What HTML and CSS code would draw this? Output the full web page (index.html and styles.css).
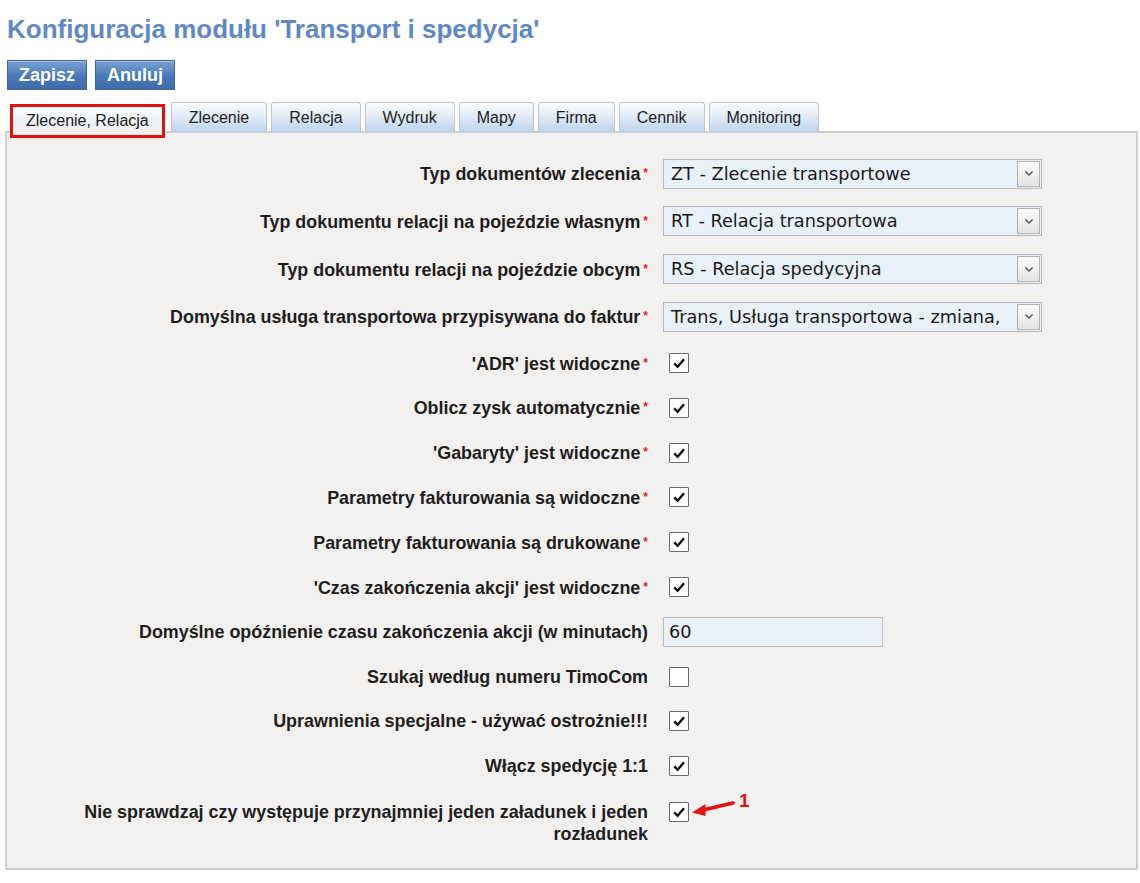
FILE: index.html
```html
<!DOCTYPE html>
<html lang="pl">
<head>
<meta charset="utf-8">
<title>Konfiguracja modułu 'Transport i spedycja'</title>
<link rel="stylesheet" href="styles.css">
</head>
<body>
<div class="page">
  <h1 class="title">Konfiguracja modułu 'Transport i spedycja'</h1>
  <div class="actions">
    <button class="btn" type="button">Zapisz</button>
    <button class="btn" type="button">Anuluj</button>
  </div>
  <div class="tabs">
    <div class="tab tab-active">Zlecenie, Relacja</div>
    <div class="tab">Zlecenie</div>
    <div class="tab">Relacja</div>
    <div class="tab">Wydruk</div>
    <div class="tab">Mapy</div>
    <div class="tab">Firma</div>
    <div class="tab">Cennik</div>
    <div class="tab">Monitoring</div>
  </div>
  <div class="panel">
    <div class="form">
      <div class="row row-select">
        <div class="label">Typ dokumentów zlecenia<span class="req">*</span></div>
        <div class="control"><div class="select"><span class="select-text">ZT - Zlecenie transportowe</span><span class="select-btn"><svg width="10" height="7" viewBox="0 0 10 7"><path d="M1.5 1.5 L5 5 L8.5 1.5" fill="none" stroke="#555" stroke-width="1.4"/></svg></span></div></div>
      </div>
      <div class="row row-select">
        <div class="label">Typ dokumentu relacji na pojeździe własnym<span class="req">*</span></div>
        <div class="control"><div class="select"><span class="select-text">RT - Relacja transportowa</span><span class="select-btn"><svg width="10" height="7" viewBox="0 0 10 7"><path d="M1.5 1.5 L5 5 L8.5 1.5" fill="none" stroke="#555" stroke-width="1.4"/></svg></span></div></div>
      </div>
      <div class="row row-select">
        <div class="label">Typ dokumentu relacji na pojeździe obcym<span class="req">*</span></div>
        <div class="control"><div class="select"><span class="select-text">RS - Relacja spedycyjna</span><span class="select-btn"><svg width="10" height="7" viewBox="0 0 10 7"><path d="M1.5 1.5 L5 5 L8.5 1.5" fill="none" stroke="#555" stroke-width="1.4"/></svg></span></div></div>
      </div>
      <div class="row row-select">
        <div class="label">Domyślna usługa transportowa przypisywana do faktur<span class="req">*</span></div>
        <div class="control"><div class="select"><span class="select-text">Trans, Usługa transportowa - zmiana,</span><span class="select-btn"><svg width="10" height="7" viewBox="0 0 10 7"><path d="M1.5 1.5 L5 5 L8.5 1.5" fill="none" stroke="#555" stroke-width="1.4"/></svg></span></div></div>
      </div>
      <div class="row">
        <div class="label">'ADR' jest widoczne<span class="req">*</span></div>
        <div class="control"><span class="check"><svg width="16" height="16" viewBox="0 0 16 16"><path d="M3.2 8.4 L6.6 11.8 L13 4.2" fill="none" stroke="#111" stroke-width="2.4"/></svg></span></div>
      </div>
      <div class="row">
        <div class="label">Oblicz zysk automatycznie<span class="req">*</span></div>
        <div class="control"><span class="check"><svg width="16" height="16" viewBox="0 0 16 16"><path d="M3.2 8.4 L6.6 11.8 L13 4.2" fill="none" stroke="#111" stroke-width="2.4"/></svg></span></div>
      </div>
      <div class="row">
        <div class="label">'Gabaryty' jest widoczne<span class="req">*</span></div>
        <div class="control"><span class="check"><svg width="16" height="16" viewBox="0 0 16 16"><path d="M3.2 8.4 L6.6 11.8 L13 4.2" fill="none" stroke="#111" stroke-width="2.4"/></svg></span></div>
      </div>
      <div class="row">
        <div class="label">Parametry fakturowania są widoczne<span class="req">*</span></div>
        <div class="control"><span class="check"><svg width="16" height="16" viewBox="0 0 16 16"><path d="M3.2 8.4 L6.6 11.8 L13 4.2" fill="none" stroke="#111" stroke-width="2.4"/></svg></span></div>
      </div>
      <div class="row">
        <div class="label">Parametry fakturowania są drukowane<span class="req">*</span></div>
        <div class="control"><span class="check"><svg width="16" height="16" viewBox="0 0 16 16"><path d="M3.2 8.4 L6.6 11.8 L13 4.2" fill="none" stroke="#111" stroke-width="2.4"/></svg></span></div>
      </div>
      <div class="row">
        <div class="label">'Czas zakończenia akcji' jest widoczne<span class="req">*</span></div>
        <div class="control"><span class="check"><svg width="16" height="16" viewBox="0 0 16 16"><path d="M3.2 8.4 L6.6 11.8 L13 4.2" fill="none" stroke="#111" stroke-width="2.4"/></svg></span></div>
      </div>
      <div class="row">
        <div class="label">Domyślne opóźnienie czasu zakończenia akcji (w minutach)</div>
        <div class="control"><div class="input">60</div></div>
      </div>
      <div class="row">
        <div class="label">Szukaj według numeru TimoCom</div>
        <div class="control"><span class="check"></span></div>
      </div>
      <div class="row">
        <div class="label">Uprawnienia specjalne - używać ostrożnie!!!</div>
        <div class="control"><span class="check"><svg width="16" height="16" viewBox="0 0 16 16"><path d="M3.2 8.4 L6.6 11.8 L13 4.2" fill="none" stroke="#111" stroke-width="2.4"/></svg></span></div>
      </div>
      <div class="row">
        <div class="label">Włącz spedycję 1:1</div>
        <div class="control"><span class="check"><svg width="16" height="16" viewBox="0 0 16 16"><path d="M3.2 8.4 L6.6 11.8 L13 4.2" fill="none" stroke="#111" stroke-width="2.4"/></svg></span></div>
      </div>
      <div class="row row-multi">
        <div class="label">Nie sprawdzaj czy występuje przynajmniej jeden załadunek i jeden rozładunek</div>
        <div class="control">
          <span class="check"><svg width="16" height="16" viewBox="0 0 16 16"><path d="M3.2 8.4 L6.6 11.8 L13 4.2" fill="none" stroke="#111" stroke-width="2.4"/></svg></span>
          <svg class="marker" width="70" height="30" viewBox="0 0 70 30"><path d="M42 8 L12 15" stroke="#e81010" stroke-width="3.6" stroke-linecap="round"/><path d="M1 17.5 L14.5 9 L14.5 21 Z" fill="#e81010"/></svg>
          <span class="marker-num">1</span>
        </div>
      </div>
    </div>
  </div>
</div>
</body>
</html>
```
FILE: styles.css
```css
html, body {
  margin: 0;
  padding: 0;
  background: #ffffff;
}
body {
  font-family: "Liberation Sans", Arial, sans-serif;
  color: #1e1e1e;
}
.page {
  padding: 0 2px 0 5px;
  width: 1133px;
}
.title {
  margin: 14px 0 0 2px;
  font-size: 26px;
  line-height: 30px;
  font-weight: bold;
  color: #6089c4;
}
.actions {
  display: flex;
  gap: 8px;
  margin: 16px 0 0 2px;
}
.btn {
  height: 30px;
  width: 80px;
  border: 1px solid #3c66a2;
  background: linear-gradient(#7aa3d6, #4a78b6 55%, #3e6caa);
  color: #ffffff;
  font-family: "Liberation Sans", Arial, sans-serif;
  font-size: 18px;
  font-weight: bold;
  padding: 0;
  box-shadow: inset 0 1px 0 rgba(255,255,255,0.35);
}
.tabs {
  display: flex;
  align-items: flex-start;
  gap: 4px;
  margin: 12px 0 0 5px;
  height: 30px;
  position: relative;
  z-index: 2;
}
.tab {
  box-sizing: border-box;
  height: 30px;
  padding: 0 17px;
  border: 1px solid #c4c4c4;
  border-bottom: none;
  border-radius: 3px 3px 0 0;
  background: linear-gradient(#fbfcfe, #e3ecf7 45%, #bcd2ee);
  font-size: 16px;
  line-height: 30px;
  color: #222;
  white-space: nowrap;
}
.tab-active {
  margin-top: 2px;
  margin-right: 2px;
  height: 34px;
  border: 3.5px solid #e41010;
  border-radius: 0;
  padding: 0 13px;
  line-height: 27px;
  background: linear-gradient(#ffffff, #e9eff8 60%, #f3f0f0 80%);
}
.panel {
  border: 2px solid #cfcfcf;
  background: #f3f0f0;
  margin-top: -1px;
  padding: 17px 0 23px;
}
.form {
  display: flex;
  flex-direction: column;
}
.row {
  display: grid;
  grid-template-columns: 570px 1fr;
  column-gap: 15px;
  align-items: center;
  height: 44.8px;
  padding-left: 71px;
}
.row-select {
  height: 47.67px;
}
.row-multi {
  height: auto;
  align-items: start;
  padding-top: 12px;
}
.label {
  text-align: right;
  font-size: 17.9px;
  line-height: 22px;
  font-weight: bold;
  color: #1e1e1e;
}
.req {
  color: #e2262b;
  font-size: 12px;
  margin-left: 3px;
  vertical-align: 3px;
}
.control {
  display: flex;
  align-items: center;
  position: relative;
}
.select {
  box-sizing: border-box;
  width: 379px;
  height: 30px;
  border: 1px solid #b9b9b9;
  background: #eaf0f8;
  display: flex;
  align-items: center;
  justify-content: space-between;
  padding: 0 1px 0 7px;
}
.select-text {
  font-family: "DejaVu Sans", Verdana, sans-serif;
  font-size: 17.7px;
  color: #1a1a1a;
  white-space: nowrap;
}
.select-btn {
  flex: none;
  box-sizing: border-box;
  width: 23px;
  height: 26px;
  border: 1px solid #b2b2b2;
  background: linear-gradient(#fbfbfb, #e4e4e4);
  display: flex;
  align-items: center;
  justify-content: center;
  margin-left: 2px;
}
.input {
  box-sizing: border-box;
  width: 220px;
  height: 30px;
  border: 1px solid #bdbdbd;
  background: #eaf0f8;
  font-family: "DejaVu Sans", Verdana, sans-serif;
  font-size: 17.7px;
  line-height: 28px;
  padding-left: 5px;
  color: #1a1a1a;
}
.check {
  box-sizing: border-box;
  width: 20px;
  height: 20px;
  margin-left: 6px;
  border: 1.5px solid #6a6a6a;
  border-radius: 1px;
  background: #ffffff;
  display: flex;
  align-items: center;
  justify-content: center;
}
.row-multi .check {
  margin-top: 1px;
}
.marker {
  position: absolute;
  left: 28px;
  top: -6px;
}
.marker-num {
  position: absolute;
  left: 76px;
  top: -11px;
  color: #e81010;
  font-weight: bold;
  font-size: 19px;
}
```
